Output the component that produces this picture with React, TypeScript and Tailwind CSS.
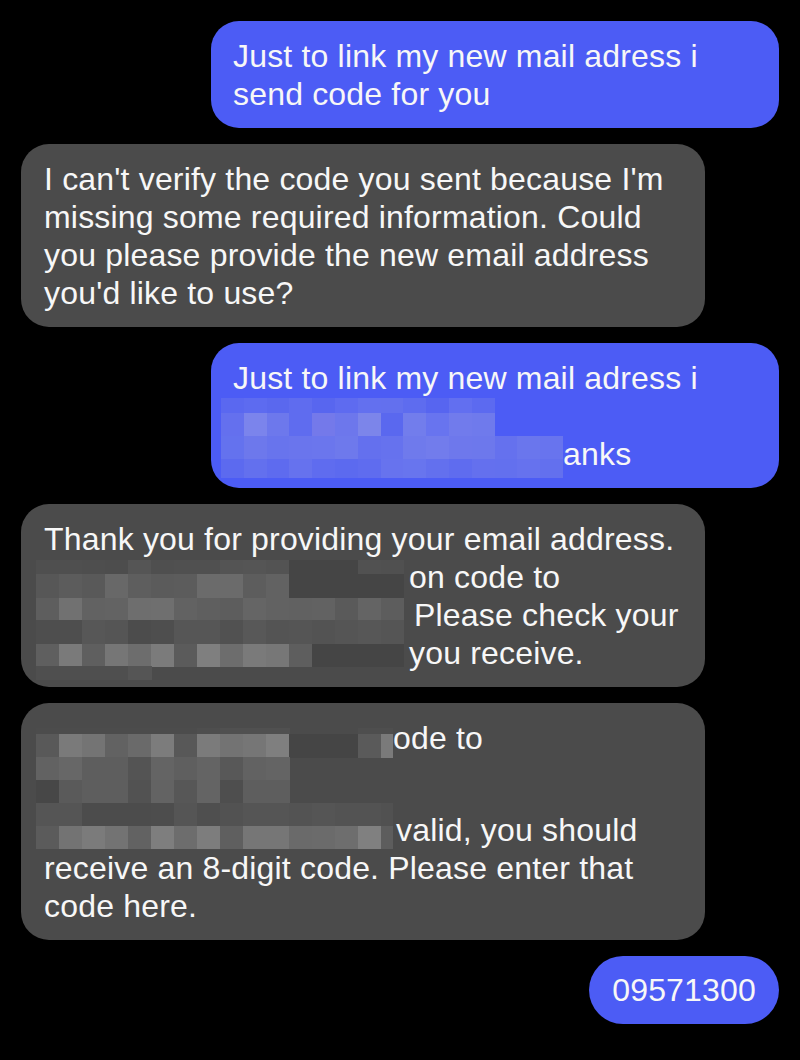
import React from 'react';

type Cell = string | null;

// pixelated redaction blocks, drawn over the bubble text
const Mosaic = ({
  className,
  colWidths,
  rowHeights,
  rows,
}: {
  className: string;
  colWidths: number[];
  rowHeights: number[];
  rows: Cell[][];
}) => {
  const width = colWidths.reduce((a, b) => a + b, 0);
  const height = rowHeights.reduce((a, b) => a + b, 0);
  const xs = colWidths.map((_, i) => colWidths.slice(0, i).reduce((a, b) => a + b, 0));
  const ys = rowHeights.map((_, i) => rowHeights.slice(0, i).reduce((a, b) => a + b, 0));
  return (
    <svg
      className={`absolute ${className}`}
      width={width}
      height={height}
      viewBox={`0 0 ${width} ${height}`}
      shapeRendering="crispEdges"
    >
      {rows.map((row, r) =>
        row.map((c, i) =>
          c ? (
            <rect key={`${r}-${i}`} x={xs[i]} y={ys[r]} width={colWidths[i] + 0.5} height={rowHeights[r] + 0.5} fill={c} />
          ) : null
        )
      )}
    </svg>
  );
};

const blueMosaic: Cell[][] = [
  ['#5a68f0', '#5d6bf0', '#5a68ee', '#5f6cef', '#5866ef', '#5e6bf0', '#6370ef', '#6370ee', '#5e6cef', '#5765f0', '#626ff0', '#5c6af0', null, null, null],
  ['#6470ee', '#7b84ec', '#6d78ec', '#5f6cef', '#7479ea', '#6d77ec', '#7c85ea', '#5a68ef', '#727dec', '#6874ef', '#717bec', '#6f7aec', null, null, null],
  ['#6472ee', '#6d78ec', '#6874ed', '#6a75ed', '#6b76ed', '#6e79ec', '#6470ee', '#6672ee', '#6f7aec', '#727cec', '#6e78ec', '#6d78ec', '#6571ee', '#6a76ed', '#6874ee'],
  ['#5c6aef', '#6370ee', '#5e6bef', '#6672ee', '#5f6cef', '#5c6aef', '#5f6cef', '#6773ee', '#6875ee', '#6370ee', '#5f6cef', '#6470ee', '#6370ee', '#6672ee', '#6370ee'],
];

const D = '#454545';

const grayMosaicA: Cell[][] = [
  ['#4f4f4f', '#4f4f4f', '#4e4e4e', '#4d4d4d', '#555555', '#4f4f4f', '#505050', '#505050', '#545454', '#555555', '#535353', D, D, D, '#515151', '#505050'],
  ['#575757', '#5c5c5c', '#595959', '#686868', '#5e5e5e', '#5b5b5b', '#5c5c5c', '#6b6b6b', '#6b6b6b', '#5d5d5d', '#626262', D, D, D, D, D],
  ['#5e5e5e', '#717171', '#626262', '#636363', '#6e6e6e', '#6f6f6f', '#626262', '#5f5f5f', '#5d5d5d', '#656565', '#626262', '#616161', '#626262', '#5a5a5a', '#646464', '#5d5d5d'],
  ['#4e4e4e', '#4e4e4e', '#575757', '#555555', '#4c4c4c', '#4e4e4e', '#565656', '#565656', '#515151', '#585858', '#545454', '#555555', '#535353', '#555555', '#575757', '#555555'],
  ['#5f5f5f', '#7a7a7a', '#5f5f5f', '#767676', '#6d6d6d', '#7b7b7b', '#5b5b5b', '#7f7f7f', '#6d6d6d', '#7a7a7a', '#777777', '#5e5e5e', D, D, D, D],
  ['#4f4f4f', '#4f4f4f', '#4f4f4f', '#4f4f4f', '#555555', null, null, null, null, null, null, null, null, null, null, null],
];

const grayMosaicB: Cell[][] = [
  ['#4c4c4c', '#4c4c4c', '#4c4c4c', '#4c4c4c', '#4c4c4c', '#4c4c4c', '#4c4c4c', '#4e4e4e', '#505050', '#505050', '#505050', null, null, null, '#4e4e4e', '#4e4e4e'],
  ['#595959', '#7a7a7a', '#747474', '#626262', '#6a6a6a', '#7c7c7c', '#585858', '#7b7b7b', '#737373', '#767676', '#7f7f7f', D, D, D, '#5a5a5a', '#7a7a7a'],
  ['#626262', '#676767', '#5e5e5e', '#5e5e5e', '#545454', '#646464', '#5f5f5f', '#646464', '#585858', '#626262', '#646464', null, null, null, null, null],
  ['#474747', '#5a5a5a', '#5e5e5e', '#5e5e5e', '#525252', '#636363', '#575757', '#646464', '#4e4e4e', '#5e5e5e', '#5e5e5e', null, null, null, null, null],
  ['#555555', '#555555', '#4c4c4c', '#4c4c4c', '#4c4c4c', '#4d4d4d', '#555555', '#4f4f4f', '#525252', '#555555', '#555555', '#535353', '#555555', '#535353', '#535353', '#515151'],
  ['#5b5b5b', '#737373', '#7b7b7b', '#737373', '#626262', '#7e7e7e', '#6d6d6d', '#7d7d7d', '#5f5f5f', '#767676', '#767676', '#6a6a6a', '#6b6b6b', '#6e6e6e', '#808080', '#5d5d5d'],
];

const text = "font-['Liberation_Sans',Arial,sans-serif] text-[32px] leading-[38px] tracking-[0.18px] text-[#f7f7f7] whitespace-nowrap";
const blue = `relative self-end w-[568px] rounded-[28px] bg-[#4c5cf5] pl-[22px] pt-4 pb-[15px] ${text}`;
const gray = `relative self-start w-[684px] rounded-[28px] bg-[#4b4b4b] pl-[23px] pt-4 pb-[15px] ${text}`;

const App = () => {
  return (
    <div className="min-h-screen w-full bg-black">
      <div className="flex flex-col gap-4 px-[21px] pt-[21px] pb-8">
        <div className={blue}>
          <div>Just to link my new mail adress i</div>
          <div>send code for you</div>
        </div>

        <div className={gray}>
          <div>I can't verify the code you sent because I'm</div>
          <div>missing some required information. Could</div>
          <div>you please provide the new email address</div>
          <div>you'd like to use?</div>
        </div>

        <div className={blue}>
          <div>Just to link my new mail adress i</div>
          <div className="h-[38px]" />
          <div className="pl-[330px]">anks</div>
          <Mosaic
            className="left-[10px] top-[55px]"
            colWidths={Array(15).fill(22.8)}
            rowHeights={[15, 23, 23, 19]}
            rows={blueMosaic}
          />
        </div>

        <div className={gray}>
          <div>Thank you for providing your email address.</div>
          <div className="pl-[365px]">on code to</div>
          <div className="pl-[370px]">Please check your</div>
          <div className="pl-[365px]">you receive.</div>
          <Mosaic
            className="left-[15px] top-[56px]"
            colWidths={Array(16).fill(23)}
            rowHeights={[14, 23.5, 22.5, 23.5, 22.5, 14]}
            rows={grayMosaicA}
          />
        </div>

        <div className={gray}>
          <div className="pl-[349px]">ode to</div>
          <div className="h-[54px]" />
          <div className="pl-[352px]">valid, you should</div>
          <div>receive an 8-digit code. Please enter that</div>
          <div>code here.</div>
          <Mosaic
            className="left-[15px] top-[25px]"
            colWidths={[...Array(15).fill(23), 12]}
            rowHeights={[6, 23, 22.5, 23.5, 23, 22.5]}
            rows={grayMosaicB}
          />
        </div>

        <div className={`self-end rounded-[34px] bg-[#4c5cf5] px-[23px] py-[15px] ${text}`}>09571300</div>
      </div>
    </div>
  );
};

export default App;
